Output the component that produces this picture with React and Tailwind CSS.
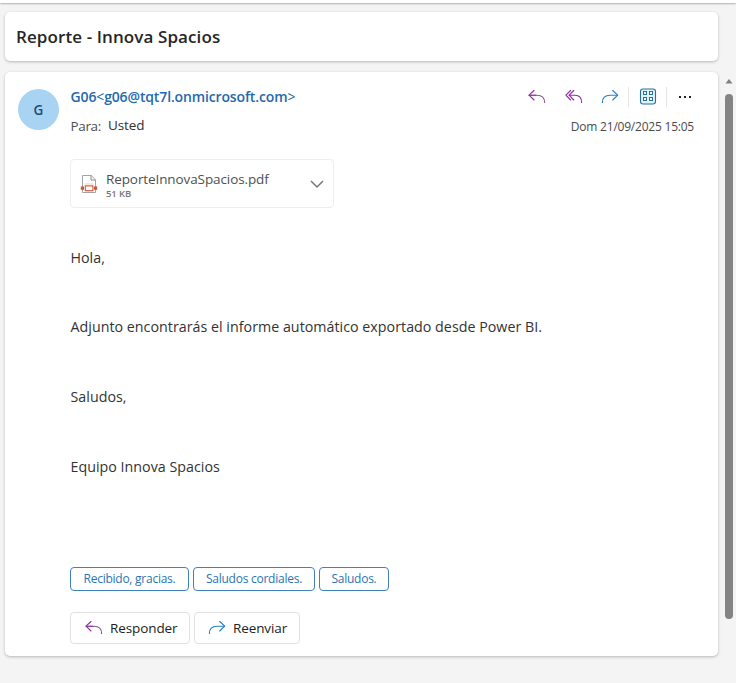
function ReplyIcon({ className }) {
  return (
    <svg className={className} width="18" height="16" viewBox="0 0 18 16" fill="none" stroke="currentColor" strokeWidth="1.15" strokeLinecap="round" strokeLinejoin="round">
      <path d="M6 1.5 1 6.2l5 4.8" />
      <path d="M1.2 6.2H9c4.5 0 7.6 2.6 7.6 7.3" stroke="#8a5a9c" />
      <path d="M1.2 6.2H8" />
    </svg>
  );
}

function ReplyAllIcon({ className }) {
  return (
    <svg className={className} width="18" height="16" viewBox="0 0 18 16" fill="none" stroke="currentColor" strokeWidth="1.15" strokeLinecap="round" strokeLinejoin="round">
      <path d="M5.6 1.5.9 6.2l4.7 4.8" />
      <path d="M8.8 1.5 4.1 6.2 8.8 11" />
      <path d="M4.3 6.2H10c4 0 6.6 2.6 6.6 7.3" />
    </svg>
  );
}

function ForwardIcon({ className }) {
  return (
    <svg className={className} width="18" height="16" viewBox="0 0 18 16" fill="none" stroke="currentColor" strokeWidth="1.15" strokeLinecap="round" strokeLinejoin="round">
      <path d="m11.7 1.5 5 4.7-5 4.8" />
      <path d="M16.5 6.2H9c-4.5 0-7.6 2.6-7.6 7.3" />
    </svg>
  );
}

function AppsIcon() {
  return (
    <svg className="shrink-0" width="18" height="18" viewBox="0 0 18 18" fill="none" stroke="#2b7099">
      <rect x="1.5" y="1" width="15" height="15" rx="2.5" fill="#dff3fd" strokeWidth="1.1" />
      <g fill="#ffffff" strokeWidth="1">
        <rect x="4.5" y="3.5" width="3" height="3" />
        <rect x="10.5" y="3.5" width="3" height="3" />
        <rect x="4.5" y="9.5" width="3" height="3" />
        <rect x="10.5" y="9.5" width="3" height="3" />
      </g>
    </svg>
  );
}

function PdfIcon() {
  return (
    <svg className="shrink-0" width="18" height="20" viewBox="0 0 18 20" fill="none">
      <path d="M2.5 1.5h8.7l4.3 4.3v12.7h-13z" fill="#fff" stroke="#a3a3a3" />
      <path d="M11 1.5v4.5h4.5" stroke="#8c8c8c" />
      <path d="M4.5 10h9" stroke="#f5cdbd" />
      <path d="M.8 12.6h3.2v3.2H.8zM14 12.6h3.2v3.2H14z" fill="#cd5332" />
      <rect x="5.3" y="11.9" width="7.6" height="4.8" fill="#fff" stroke="#cd5332" strokeWidth="1.1" />
    </svg>
  );
}

function Header() {
  return (
    <header className="flex h-[64px] items-start pt-[12px]">
      <div className="flex h-[49px] w-[44px] shrink-0 pt-[5px]">
        <div className="flex h-[41px] w-[41px] items-center justify-center rounded-full bg-[#a9d3f2] pt-[2px] text-[13.5px] font-semibold text-[#174e78]">
          G
        </div>
      </div>
      <div className="ml-[8.5px] flex flex-1 flex-col">
        <div className="h-[26px] text-[14px] leading-[26px] font-semibold tracking-[-0.14px] text-[#2469ad]">
          G06<span className="font-normal">&lt;</span>g06@tqt7l.onmicrosoft.com<span className="font-normal">&gt;</span>
        </div>
        <div className="flex h-[30px] gap-[7px] text-[13.5px] leading-[30px] tracking-[-0.35px]">
          <span className="pt-px text-[#4f4f4f]">Para:</span>
          <span className="tracking-[-0.1px] text-[#303030]">Usted</span>
        </div>
      </div>
      <div className="flex w-[190px] flex-col items-end">
        <div className="flex h-[25px] items-center">
          <ReplyIcon className="mr-[19px] text-[#8e2f9f]" />
          <ReplyAllIcon className="mr-[18px] text-[#8e2f9f]" />
          <ForwardIcon className="mr-[9px] text-[#2481c6]" />
          <div className="mr-[10px] h-[20px] w-px bg-[#e5e5e5]" />
          <AppsIcon />
          <div className="mr-[12px] ml-[9px] h-[20px] w-px bg-[#e5e5e5]" />
          <div className="mr-[3px] flex gap-[3px]">
            <i className="h-[2px] w-[2px] bg-[#222222]" />
            <i className="h-[2px] w-[2px] bg-[#222222]" />
            <i className="h-[2px] w-[2px] bg-[#222222]" />
          </div>
        </div>
        <div className="h-[36px] text-[12px] leading-[35px] tracking-[-0.22px] whitespace-nowrap text-[#4a4a4a]">
          Dom 21/09/2025 15:05
        </div>
      </div>
    </header>
  );
}

function Attachment() {
  return (
    <div className="flex h-[49px] w-[264px] items-center rounded-[4px] border border-[#eeeeee] pr-[9px] pl-[9px]">
      <PdfIcon />
      <div className="ml-[8px] flex flex-1 flex-col pt-[2px]">
        <span className="text-[13.5px] leading-[18px] tracking-[-0.1px] text-[#4f4f4f]">ReporteInnovaSpacios.pdf</span>
        <span className="text-[9.5px] leading-[12px] font-semibold tracking-[-0.1px] text-[#777777]">51 KB</span>
      </div>
      <svg className="mt-px" width="14" height="9" viewBox="0 0 14 9" fill="none" stroke="#777777" strokeWidth="1.5">
        <path d="m1 1 6 6 6-6" />
      </svg>
    </div>
  );
}

export default function App() {
  return (
    <main className="flex h-[683px] w-[736px] flex-col overflow-hidden bg-[#f4f4f4] font-['Open_Sans','Noto_Sans',sans-serif]">
      <div className="h-[3px] shrink-0 bg-white shadow-[0_1px_2px_rgba(0,0,0,0.28)]" />
      <div className="flex flex-1">
        <div className="ml-[5px] flex w-[713px] flex-col pt-[9px]">
          <section className="flex h-[49px] items-center rounded-[5px] bg-white pl-[11px] shadow-[0_1px_3px_rgba(0,0,0,0.25)]">
            <h1 className="text-[17px] font-semibold tracking-[0.1px] text-[#262626]">Reporte - Innova Spacios</h1>
          </section>
          <section className="mt-[11px] flex h-[584px] flex-col rounded-[5px] bg-white pr-[24px] pl-[13px] shadow-[0_1px_3px_rgba(0,0,0,0.25)]">
            <Header />
            <div className="mt-[23px] flex flex-col pl-[52px]">
              <Attachment />
              <div className="mt-[38px] ml-[0.5px] flex flex-col text-[14.25px] leading-[24px] tracking-[0.02px] text-[#333333]">
                <p>Hola,</p>
                <p className="mt-[45px]">Adjunto encontrarás el informe automático exportado desde Power BI.</p>
                <p className="mt-[46px]">Saludos,</p>
                <p className="mt-[46px]">Equipo Innova Spacios</p>
              </div>
              <div className="mt-[88px] flex gap-[4px] text-[12px] leading-[16px] tracking-[-0.25px] text-[#2b74b3]">
                <button className="h-[24px] w-[119px] rounded-[4px] border border-[#3f82bd] pb-px">Recibido, gracias.</button>
                <button className="h-[24px] w-[122px] rounded-[4px] border border-[#3f82bd] pb-px">Saludos cordiales.</button>
                <button className="h-[24px] w-[70px] rounded-[4px] border border-[#3f82bd] pb-px">Saludos.</button>
              </div>
              <div className="mt-[21px] flex gap-[4px] text-[13.5px] tracking-[-0.1px] text-[#222222]">
                <button className="flex h-[32px] w-[120px] items-center rounded-[4px] border border-[#e1e1e1] pl-[14px]">
                  <ReplyIcon className="mr-[7px] text-[#8e2f9f]" />
                  Responder
                </button>
                <button className="flex h-[32px] w-[106px] items-center rounded-[4px] border border-[#e1e1e1] pl-[13px]">
                  <ForwardIcon className="mr-[7px] text-[#2481c6]" />
                  Reenviar
                </button>
              </div>
            </div>
          </section>
        </div>
        <div className="ml-[7px] flex w-[8px] flex-col items-center pt-[76px]">
          <svg width="8" height="5" viewBox="0 0 8 5" fill="#7f7f7f">
            <path d="M4 0 7.5 4.5h-7z" />
          </svg>
          <div className="mt-[10px] h-[525px] w-[8px] rounded-full bg-[#848484]" />
        </div>
      </div>
    </main>
  );
}
